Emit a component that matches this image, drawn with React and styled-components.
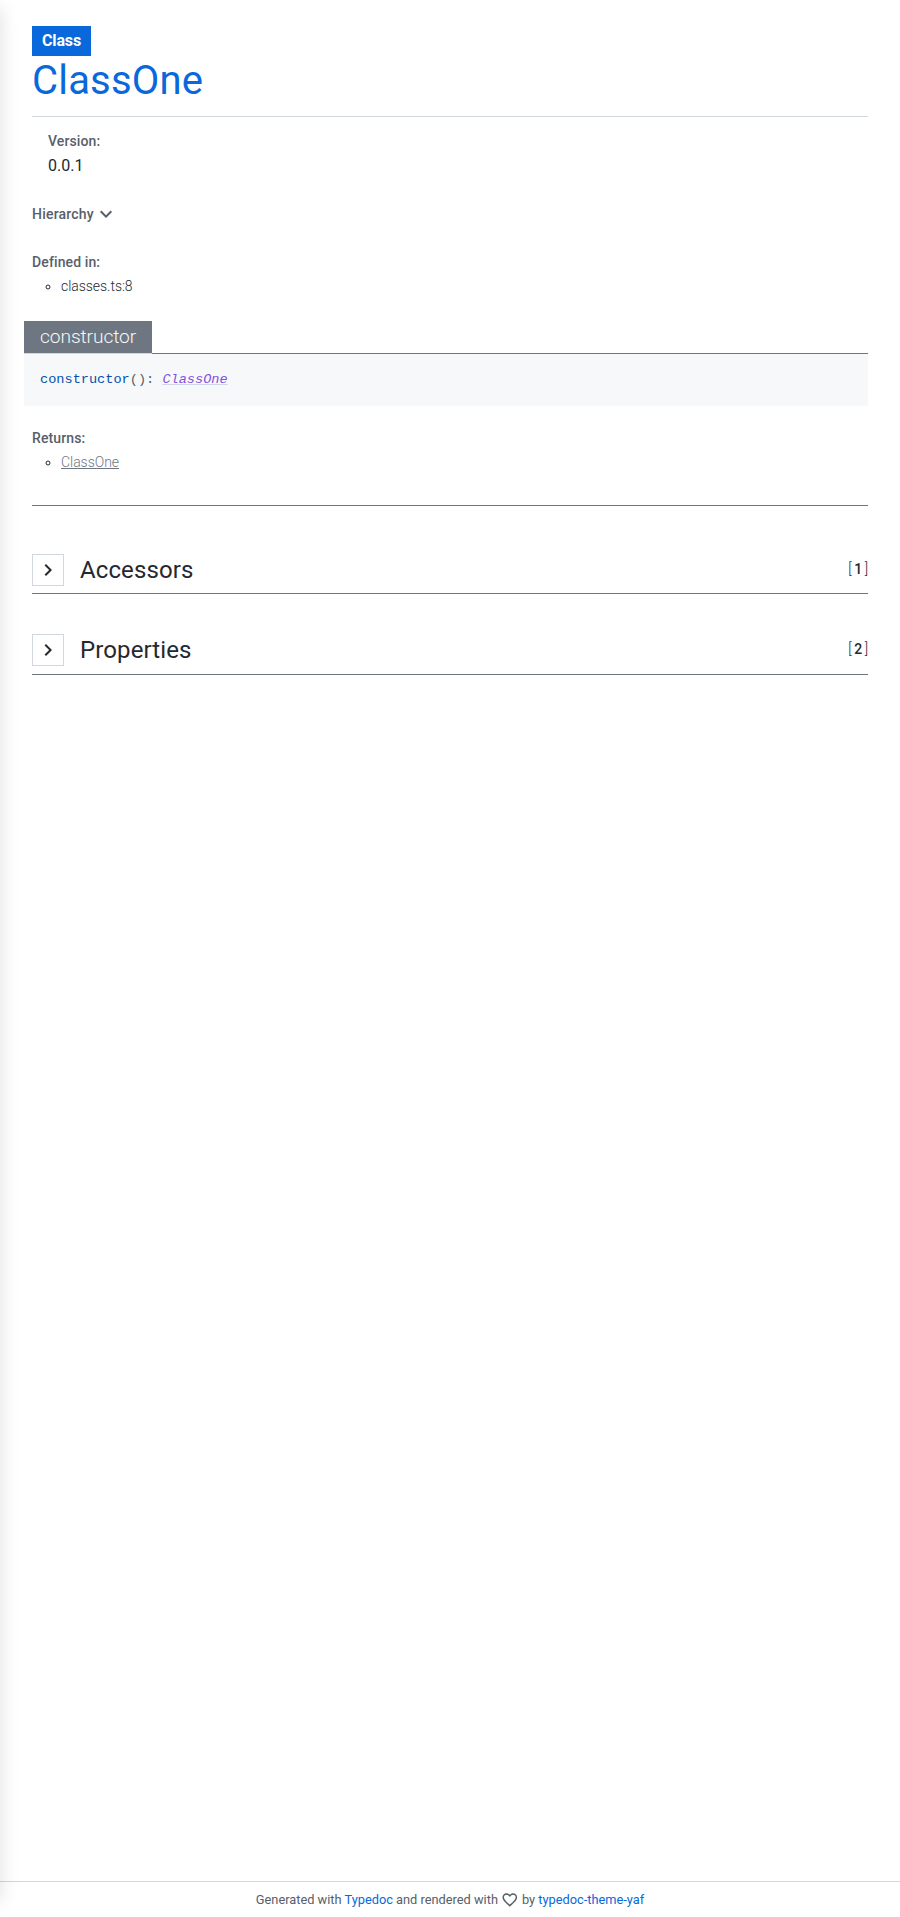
import React from "react";
import styled, { createGlobalStyle } from "styled-components";
import { MdExpandMore, MdChevronRight, MdFavoriteBorder } from "react-icons/md";

const c = {
  text: "#24292f",
  muted: "#57606a",
  subtle: "#6e7781",
  border: "#d0d7de",
  canvas: "#f6f8fa",
  accent: "#0969da",
};

const GlobalStyle = createGlobalStyle`
  * { box-sizing: border-box; }
  body {
    margin: 0;
    background: #fff;
    color: ${c.text};
    font: 400 16px/24px Roboto, sans-serif;
    overflow: hidden;
  }
`;

const Page = styled.div`
  display: flex;
  flex-direction: column;
  min-height: 100vh;
`;

const DrawerShadow = styled.div`
  position: fixed;
  top: 8px;
  bottom: 16px;
  left: -300px;
  width: 300px;
  box-shadow: 0 0 18px rgba(0, 0, 0, 0.13);
`;

const Main = styled.main`
  flex: 1;
  padding: 26px 32px 0;
`;

const Header = styled.header`
  display: flex;
  flex-direction: column;
  align-items: flex-start;
  height: 91px;
  border-bottom: 1px solid ${c.border};
`;

const Badge = styled.span`
  width: 59px;
  height: 30px;
  padding: 0 10px;
  background: ${c.accent};
  color: #fff;
  font-weight: 700;
  letter-spacing: -0.14px;
  line-height: 30px;
`;

const Title = styled.h1`
  margin: 0;
  color: ${c.accent};
  font-size: 40px;
  font-weight: 400;
  letter-spacing: 0.2px;
  line-height: 49px;
`;

const Label = styled.div`
  display: flex;
  align-items: center;
  height: 24px;
  color: ${c.muted};
  font-size: 14px;
  font-weight: 500;
  letter-spacing: ${(p) => p.$spacing || 0.12}px;
`;

const Version = styled.section`
  padding: 12px 16px 0;
`;

const VersionNumber = styled.div`
  line-height: 26px;
`;

const Hierarchy = styled.section`
  margin-top: 23px;
`;

const Block = styled.section`
  margin-top: ${(p) => p.$top}px;
`;

const List = styled.ul`
  margin: 0;
  padding: 0 0 0 29px;
  list-style: circle;
  font-size: 14px;
  font-weight: 300;
  letter-spacing: -0.04px;
`;

const TypeLink = styled.a`
  color: ${c.subtle};
  text-decoration: underline;
`;

const Signature = styled.section`
  margin: 23px 0 0 -8px;
`;

const TabRow = styled.div`
  display: flex;
  align-items: stretch;
  height: 33px;
`;

const Tab = styled.h3`
  margin: 0;
  padding: 0 0 0 16px;
  width: 128px;
  background: ${c.subtle};
  border-bottom: 1px solid ${c.border};
  color: ${c.canvas};
  font-size: 19.2px;
  font-weight: 300;
  letter-spacing: -0.1px;
  line-height: 31px;
`;

const TabRule = styled.div`
  flex: 1;
  border-bottom: 1px solid ${c.subtle};
`;

const Code = styled.pre`
  margin: 0;
  height: 52px;
  padding: 14px 16px;
  background: ${c.canvas};
  color: ${c.muted};
  font: 13.6px/24px "Liberation Mono", monospace;
`;

const CodeName = styled.span`
  color: #0550ae;
`;

const CodeType = styled.a`
  color: #8250df;
  font-style: italic;
  text-decoration: underline;
  text-decoration-color: ${c.border};
`;

const Divider = styled.hr`
  height: 1px;
  margin: 31px 0 0;
  border: 0;
  background: ${c.subtle};
`;

const Group = styled.section`
  display: flex;
  align-items: flex-start;
  height: ${(p) => p.$height}px;
  margin-top: ${(p) => p.$top}px;
  border-bottom: 1px solid ${c.subtle};
`;

const Toggle = styled.button`
  display: flex;
  align-items: center;
  justify-content: center;
  width: 32px;
  height: 32px;
  padding: 0;
  border: 1px solid ${c.border};
  background: #fff;
  color: ${c.text};
`;

const GroupTitle = styled.h2`
  flex: 1;
  margin: 0 0 0 16px;
  font-size: 24px;
  font-weight: 400;
  letter-spacing: 0.11px;
  line-height: 32px;
`;

const Count = styled.span`
  font-size: 14px;
  font-weight: 300;
  line-height: 31px;

  b {
    margin: 0 2.5px;
    font-weight: 500;
  }
`;

const Footer = styled.footer`
  display: flex;
  justify-content: center;
  align-items: center;
  height: 36px;
  border-top: 1px solid ${c.border};
  color: ${c.muted};
  font-size: 12.8px;
  white-space: pre;

  a {
    color: ${c.accent};
  }
`;

export default function App() {
  return (
    <Page>
      <GlobalStyle />
      <Main>
        <Header>
          <Badge>Class</Badge>
          <Title>ClassOne</Title>
        </Header>
        <Version>
          <Label>Version:</Label>
          <VersionNumber>0.0.1</VersionNumber>
        </Version>
        <Hierarchy>
          <Label $spacing={0.21}>Hierarchy<MdExpandMore size={24} /></Label>
        </Hierarchy>
        <Block $top={24}>
          <Label>Defined in:</Label>
          <List><li>classes.ts:8</li></List>
        </Block>
        <Signature>
          <TabRow>
            <Tab>constructor</Tab>
            <TabRule />
          </TabRow>
          <Code><CodeName>constructor</CodeName>(): <CodeType>ClassOne</CodeType></Code>
        </Signature>
        <Block $top={20}>
          <Label>Returns:</Label>
          <List><li><TypeLink>ClassOne</TypeLink></li></List>
        </Block>
        <Divider />
        <Group $top={48} $height={40}>
          <Toggle><MdChevronRight size={24} /></Toggle>
          <GroupTitle>Accessors</GroupTitle>
          <Count>[<b>1</b>]</Count>
        </Group>
        <Group $top={40} $height={41}>
          <Toggle><MdChevronRight size={24} /></Toggle>
          <GroupTitle>Properties</GroupTitle>
          <Count>[<b>2</b>]</Count>
        </Group>
      </Main>
      <Footer>
        <span>Generated with <a>Typedoc</a> and rendered with </span>
        <MdFavoriteBorder size={17.6} />
        <span> by <a>typedoc-theme-yaf</a></span>
      </Footer>
      <DrawerShadow />
    </Page>
  );
}
